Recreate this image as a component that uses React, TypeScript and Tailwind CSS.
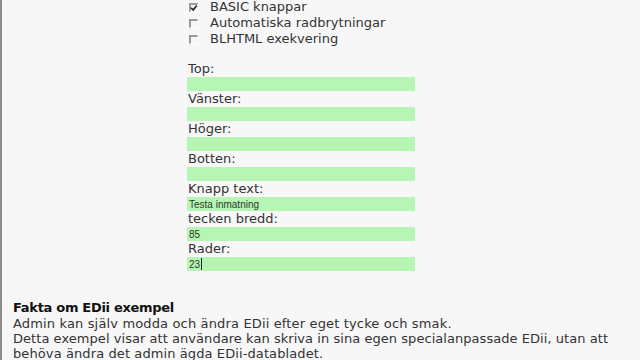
import React from 'react';

const FIELDS: { label: string; value: string; cursor?: boolean }[] = [
  { label: 'Top:', value: '' },
  { label: 'Vänster:', value: '' },
  { label: 'Höger:', value: '' },
  { label: 'Botten:', value: '' },
  { label: 'Knapp text:', value: 'Testa inmatning' },
  { label: 'tecken bredd:', value: '85' },
  { label: 'Rader:', value: '23', cursor: true },
];

const OPTIONS = [
  { label: 'BASIC knappar', checked: true },
  { label: 'Automatiska radbrytningar', checked: false },
  { label: 'BLHTML exekvering', checked: false },
];

function Check({ checked }: { checked: boolean }) {
  return (
    <span className="relative w-[9px] h-[9px] border-t-2 border-l-2 border-[#9a9a9a] border-r border-b border-r-white border-b-white bg-[#f7f7f7] shrink-0">
      {checked && (
        <svg viewBox="0 0 8 8" className="absolute -left-[1px] -top-[1px] w-[8px] h-[8px]">
          <path d="M1.2 3.8 L3.2 6 L6.8 1.5" stroke="#222" strokeWidth="1.6" fill="none" />
        </svg>
      )}
    </span>
  );
}

export default function App() {
  return (
    <div
      className="w-[640px] h-[360px] overflow-hidden bg-[#f7f7f7] border-l-2 border-[#8f8f88] text-[13px] text-[#333]"
      style={{ fontFamily: '"DejaVu Sans", Verdana, sans-serif' }}
    >
      <div className="pl-[185px] -mt-[1px]">
        {OPTIONS.map((o) => (
          <div key={o.label} className="flex items-center h-4 leading-4">
            <span className="w-[23px] flex items-center pl-[2px]">
              <Check checked={o.checked} />
            </span>
            <span>{o.label}</span>
          </div>
        ))}

        <div className="mt-[14px] flex flex-col">
          {FIELDS.map((f) => (
            <div key={f.label} className="flex flex-col">
              <div className="h-4 leading-4 pl-[1px]">{f.label}</div>
              <div
                className="w-[228px] h-[14px] bg-[#b6f5b4] flex items-center pl-[2px] text-[10px] text-[#2a3a2a]"
                style={{ fontFamily: '"Liberation Sans", Arial, sans-serif' }}
              >
                {f.value}
                {f.cursor && <span className="w-px h-[12px] bg-[#222] ml-px" />}
              </div>
            </div>
          ))}
        </div>
      </div>

      <div className="mt-[28px] pl-[11px] leading-[15px]">
        <div className="font-bold text-[#111] leading-[17px] tracking-[-0.3px]">Fakta om EDii exempel</div>
        <div className="tracking-[0.15px]">Admin kan själv modda och ändra EDii efter eget tycke och smak.</div>
        <div className="tracking-[0.05px]">Detta exempel visar att användare kan skriva in sina egen specialanpassade EDii, utan att</div>
        <div className="tracking-[0.1px]">behöva ändra det admin ägda EDii-databladet.</div>
        <div>Användare får sina egna versioner på sina egna sidor och kan ...</div>
      </div>
    </div>
  );
}
